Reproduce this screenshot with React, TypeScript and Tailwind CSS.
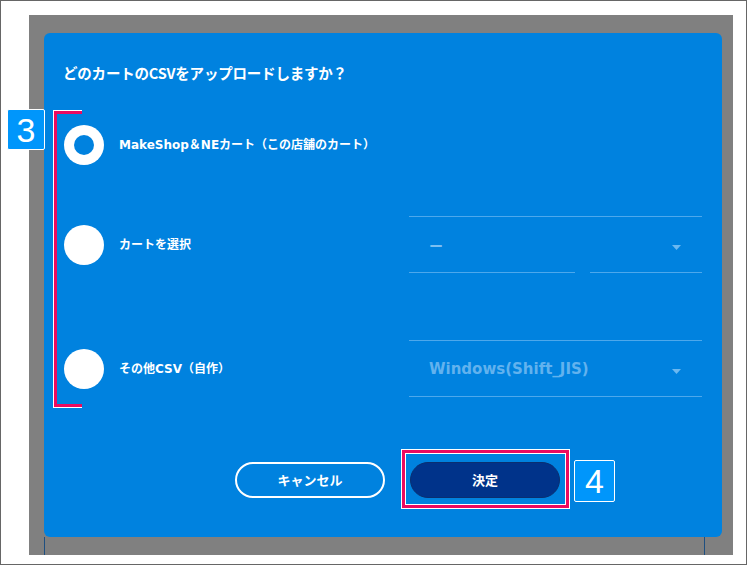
const jp = { fontFamily: '"Noto Sans CJK JP", "Noto Sans", sans-serif' };
const wide = { fontFamily: '"DejaVu Sans", "Noto Sans CJK JP", sans-serif' };

const Radio = ({ checked }: { checked?: boolean }) => (
  <div className="w-[40px] h-[40px] rounded-full bg-white flex items-center justify-center shrink-0">
    {checked && <div className="w-[20px] h-[20px] rounded-full bg-[#0082df]" />}
  </div>
);

const Caret = () => (
  <svg width="9" height="5" viewBox="0 0 9 5" className="shrink-0">
    <path d="M0 0 H9 L4.5 5 Z" fill="#6cb8f0" />
  </svg>
);

const Badge = ({ n, className }: { n: string; className: string }) => (
  <div
    className={`absolute bg-[#0096fb] border border-white rounded-[2px] flex items-center justify-center text-white text-[34px] leading-none ${className}`}
    style={{ fontFamily: '"Liberation Sans", Arial, sans-serif' }}
  >
    {n}
  </div>
);

export default function App() {
  return (
    <div className="relative w-[747px] h-[565px] bg-white border border-[#666] pt-[14px] pl-[28px]" style={jp}>
      <div className="relative w-[704px] h-[540px] bg-[#808080] pl-[15px] pt-[18px]">
        <div className="absolute left-[15px] top-[522px] w-px h-[18px] bg-[#1f4f80]" />
        <div className="absolute left-[675px] top-[522px] w-px h-[18px] bg-[#1f4f80]" />
        <div className="relative w-[678px] h-[504px] bg-[#0082df] rounded-[6px] pl-[20px] pt-[30px] text-white">
          <h1 className="h-[20px] text-[14.5px] font-bold leading-[20px] ml-[-1px] tracking-[-0.2px]">
            どのカートのCSVをアップロードしますか？
          </h1>

          <div className="mt-[33px] h-[57px] flex items-center">
            <Radio checked />
            <span className="ml-[15px] text-[12px] font-bold" style={wide}>
              MakeShop＆NEカート（この店舗のカート）
            </span>
          </div>

          <div className="mt-[43px] h-[57px] flex items-center">
            <Radio />
            <span className="ml-[15px] w-[290px] text-[12px] font-bold" style={wide}>
              カートを選択
            </span>
            <div className="h-[57px] w-[293px] border-t border-[#4da8ec] flex gap-[15px]">
              <div className="w-[166px] h-full border-b border-[#4da8ec] flex items-center pl-[20px] pt-[2px] text-[14px] font-bold text-[#7cc0f2]">
                ー
              </div>
              <div className="flex-1 h-full border-b border-[#4da8ec] flex items-center justify-end pr-[21px] pt-[6px]">
                <Caret />
              </div>
            </div>
          </div>

          <div className="mt-[67px] h-[57px] flex items-center">
            <Radio />
            <span className="ml-[15px] w-[290px] text-[12px] font-bold" style={wide}>
              その他CSV（自作）
            </span>
            <div className="h-[57px] w-[293px] border-t border-b border-[#4da8ec] flex items-center justify-between pl-[20px] pr-[21px]">
              <span className="text-[15px] font-bold text-[#62b2ee] pt-[1px]" style={wide}>
                Windows(Shift_JIS)
              </span>
              <span className="pt-[6px]">
                <Caret />
              </span>
            </div>
          </div>

          <div className="mt-[65px] flex gap-[25px] pl-[171px]">
            <button className="w-[150px] h-[36px] rounded-full border-2 border-white text-[13px] font-bold text-white">
              キャンセル
            </button>
            <button className="w-[150px] h-[36px] rounded-full bg-[#00338a] border border-[#0a2f70] text-[13px] font-bold text-white">
              決定
            </button>
          </div>

          <div className="absolute left-[9px] top-[77px] w-[29px] h-[298px] border-l border-t border-b border-white">
            <div className="w-full h-full border-l-[3px] border-t-[3px] border-b-[3px] border-[#ec0a5f]" />
          </div>
          <div className="absolute left-[357px] top-[416px] w-[169px] h-[60px] border border-white">
            <div className="w-full h-full border-[3px] border-[#ec0a5f]">
              <div className="w-full h-full border border-white" />
            </div>
          </div>
        </div>
      </div>
      <Badge n="3" className="left-[6px] top-[108px] w-[38px] h-[41px]" />
      <Badge n="4" className="left-[573px] top-[459px] w-[41px] h-[42px]" />
    </div>
  );
}
